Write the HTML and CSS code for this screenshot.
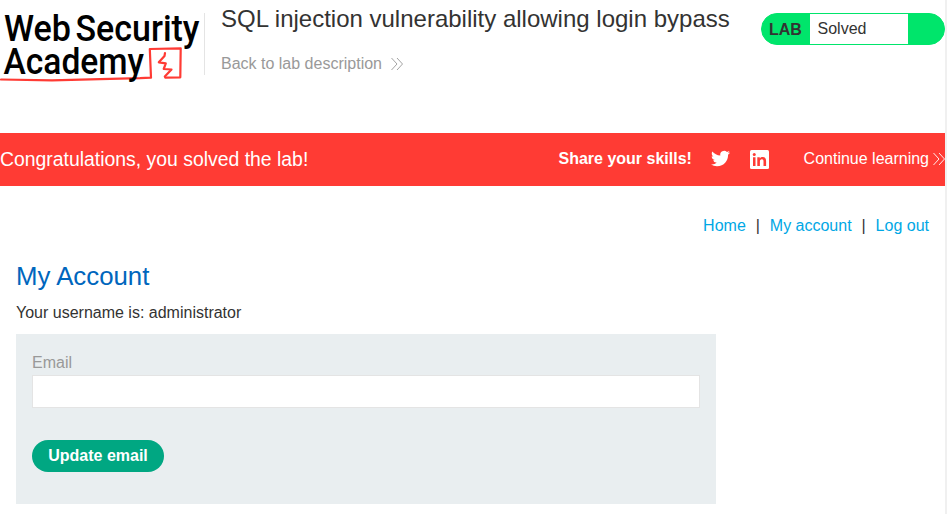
FILE: index.html
```html
<!DOCTYPE html>
<html lang="en">
<head>
<meta charset="utf-8">
<title>SQL injection vulnerability allowing login bypass</title>
<link rel="stylesheet" href="styles.css">
</head>
<body>
<div class="page">
  <header class="lab-header">
    <svg class="logo" width="204" height="90" viewBox="0 0 204 90" role="img" aria-label="Web Security Academy">
      <g class="logo-mark">
        <path d="M1 79.500L52 80.300L100 79.200L140 78.200L151 77.600L149.800 49L180.700 48.300L180.300 77.300L165.200 77.600"/>
        <path d="M165 53L164.500 56L158.800 62.300L165.800 63.400L163.700 69L171.500 69.500L164.800 76.500"/>
      </g>
      <g class="logo-text">
        <text x="4" y="41" textLength="67" lengthAdjust="spacingAndGlyphs">Web</text>
        <text x="75.500" y="41" textLength="124" lengthAdjust="spacingAndGlyphs">Security</text>
        <text x="3.500" y="73.700" textLength="140.500" lengthAdjust="spacingAndGlyphs">Academy</text>
      </g>
    </svg>
    <div class="heading">
      <h2>SQL injection vulnerability allowing login bypass</h2>
      <a class="back">Back to lab description<svg width="12" height="14" viewBox="0 0 12 14"><path d="M.5 1L6 7L.5 13M6 1L11.500 7L6 13"/></svg></a>
    </div>
    <div class="status"><b>LAB</b><span>Solved</span></div>
  </header>
  <section class="banner">
    <h4>Congratulations, you solved the lab!</h4>
    <b class="share">Share your skills!</b>
    <svg class="twitter" width="19" height="19" viewBox="0 0 24 24"><path d="M23.950 4.570a10 10 0 0 1-2.820.770 4.960 4.960 0 0 0 2.160-2.720c-.950.550-2 .950-3.130 1.180a4.920 4.920 0 0 0-8.380 4.480C7.690 8.090 4.070 6.130 1.640 3.160a4.820 4.820 0 0 0-.670 2.480c0 1.710.870 3.210 2.190 4.100a4.900 4.900 0 0 1-2.230-.620v.060a4.920 4.920 0 0 0 3.950 4.830 5 5 0 0 1-2.210.080 4.940 4.940 0 0 0 4.600 3.420A9.870 9.870 0 0 1 0 19.540a13.990 13.990 0 0 0 7.550 2.210c9.050 0 14-7.500 14-13.980 0-.210 0-.420-.020-.630a9.940 9.940 0 0 0 2.460-2.550z"/></svg>
    <svg class="linkedin" width="19" height="19" viewBox="0 0 19 19"><rect width="19" height="19" rx="1.500"/><path d="M3 7.200h2.500V16H3zM7.300 7.200h2.500v1.300c.700-1.100 1.600-1.500 2.900-1.500 2.700 0 3.400 1.700 3.400 4.200V16h-2.600v-4.500c0-1.300-.200-2.300-1.600-2.300S9.900 10.200 9.900 11.400V16H7.300z"/><circle cx="4.250" cy="4.500" r="1.500"/></svg>
    <a class="continue">Continue learning<svg width="12" height="14" viewBox="0 0 12 14"><path d="M.5 1L6 7L.5 13M6 1L11.500 7L6 13"/></svg></a>
  </section>
  <nav><a>Home</a><span>|</span><a>My account</a><span>|</span><a>Log out</a></nav>
  <main>
    <h1>My Account</h1>
    <p>Your username is: administrator</p>
    <form>
      <label for="email">Email</label>
      <input id="email" type="email">
      <button type="button">Update email</button>
    </form>
  </main>
</div>
</body>
</html>
```
FILE: styles.css
```css
* { box-sizing: border-box; }
body {
  margin: 0;
  height: 514px;
  overflow: hidden;
  font: 16px/20px "Liberation Sans", Arial, sans-serif;
  color: #333332;
  background: #fff;
}
h1, h2, h4, p { margin: 0; font-weight: 400; }
.page { height: 514px; border-right: 2px solid #f0f0f0; }
.lab-header { display: flex; height: 133px; }
.logo { flex: none; }
.logo-text { font: 500 37.4px Roboto, sans-serif; fill: #000; }
.logo-mark path { fill: none; stroke: #ff3b34; stroke-width: 2.200; stroke-linejoin: round; stroke-linecap: round; }
.heading {
  margin-top: 13px;
  height: 62px;
  padding-left: 16px;
  border-left: 1px solid #e4e4e4;
}
h2 { font-size: 24px; line-height: 28px; margin-top: -8px; white-space: nowrap; }
.back { display: flex; align-items: center; margin-top: 21px; color: #999; }
.back svg { margin-left: 9px; fill: none; stroke: #999; stroke-width: .9; }
.status {
  display: flex;
  width: 184px;
  height: 32px;
  margin: 13px 0 0 auto;
  border: 1px solid #00e56b;
  border-radius: 16px;
  background: #00e56b;
  line-height: 30px;
  overflow: hidden;
}
.status b { width: 48px; padding-left: 7px; line-height: 32px; }
.status span { width: 98px; padding-left: 7.500px; background: #fff; }
.banner {
  display: flex;
  align-items: center;
  height: 53px;
  background: #ff3b34;
  color: #fff;
}
.banner h4 { font-size: 19.4px; width: 558.500px; margin-top: -2px; }
.share { width: 152px; margin-top: -2px; white-space: nowrap; }
.twitter { fill: #fff; margin: -2px 20px 0 0; }
.linkedin { fill: #fff; }
.linkedin path, .linkedin circle { fill: #ff3b34; }
.continue { display: flex; align-items: center; margin: -2px 0 0 auto; white-space: nowrap; }
.continue svg { margin-left: 4px; fill: none; stroke: #fff; stroke-width: .9; }
nav { display: flex; justify-content: flex-end; padding: 30px 16px 0 0; }
nav a { color: #00a7e5; }
nav span { margin: 0 10px; width: 4px; }
main { padding: 24px 16px 0; }
h1 { font-size: 25.8px; line-height: 32px; color: #0066bd; }
p { margin-top: 11px; }
form {
  width: 700px;
  height: 170px;
  margin-top: 11px;
  padding: 19px 16px;
  background: #e9eef0;
}
label { display: block; color: #999; }
input {
  display: block;
  width: 668px;
  height: 33px;
  margin: 2px 0 32px;
  border: 1px solid #e4e4e4;
  background: #fff;
}
button {
  width: 132px;
  height: 32px;
  padding: 0;
  border: 0;
  border-radius: 16px;
  background: #00a782;
  color: #fff;
  font: bold 16px "Liberation Sans", Arial, sans-serif;
}
```
